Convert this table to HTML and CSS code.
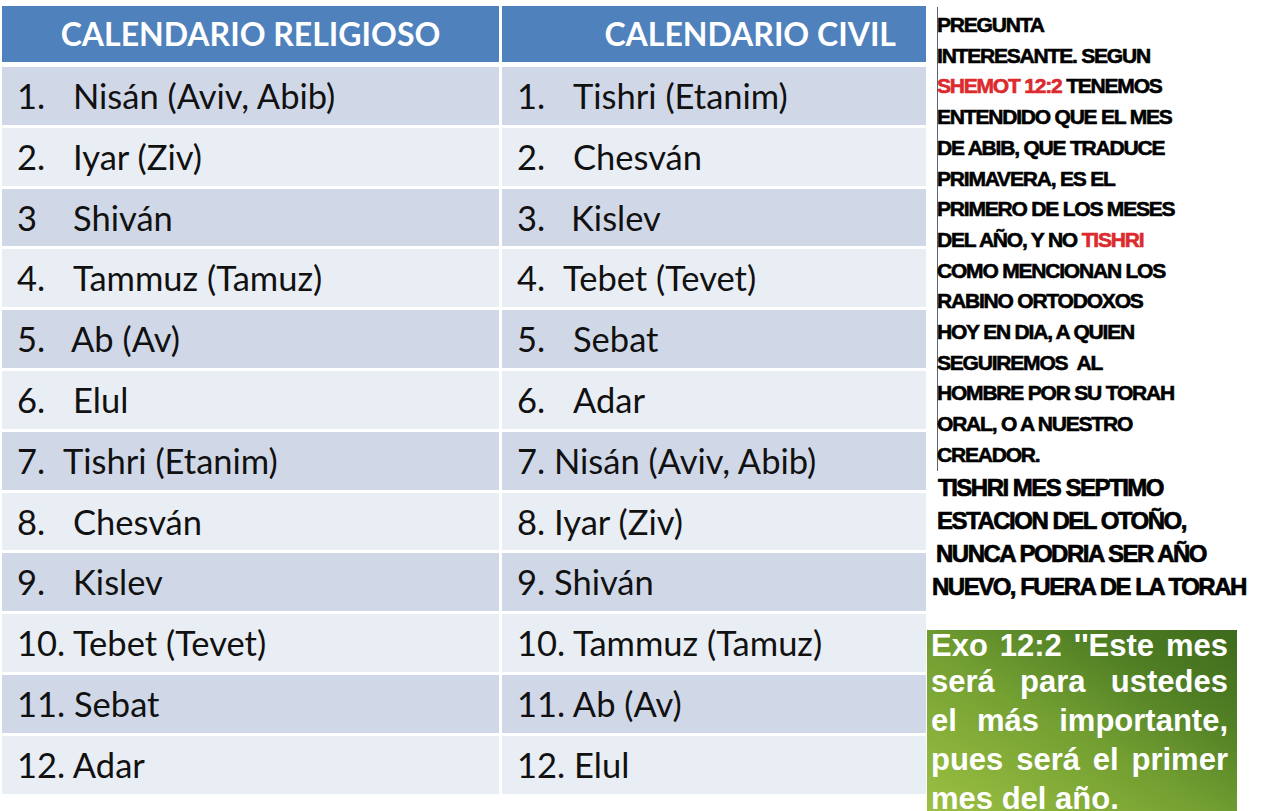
FILE: index.html
```html
<!DOCTYPE html>
<html lang="es">
<head>
<meta charset="utf-8">
<title>Calendario Religioso y Civil</title>
<link rel="stylesheet" href="styles.css">
</head>
<body>
<div class="page">
  <div class="table">
    <div class="head">
      <div class="hcell">CALENDARIO RELIGIOSO</div>
      <div class="hcell hcell-right">CALENDARIO CIVIL</div>
    </div>
    <div class="rows">
      <div class="row"><div class="cell"><span class="num">1.</span>Nisán (Aviv, Abib)</div><div class="cell"><span class="num">1.</span>Tishri (Etanim)</div></div>
      <div class="row"><div class="cell"><span class="num">2.</span>Iyar (Ziv)</div><div class="cell"><span class="num">2.</span>Chesván</div></div>
      <div class="row"><div class="cell"><span class="num">3</span>Shiván</div><div class="cell"><span class="num num-54">3.</span>Kislev</div></div>
      <div class="row"><div class="cell"><span class="num">4.</span>Tammuz (Tamuz)</div><div class="cell"><span class="num num-46">4.</span>Tebet (Tevet)</div></div>
      <div class="row"><div class="cell"><span class="num num-54">5.</span>Ab (Av)</div><div class="cell"><span class="num">5.</span>Sebat</div></div>
      <div class="row"><div class="cell"><span class="num">6.</span>Elul</div><div class="cell"><span class="num">6.</span>Adar</div></div>
      <div class="row"><div class="cell"><span class="num num-46">7.</span>Tishri (Etanim)</div><div class="cell">7. Nisán (Aviv, Abib)</div></div>
      <div class="row"><div class="cell"><span class="num">8.</span>Chesván</div><div class="cell">8. Iyar (Ziv)</div></div>
      <div class="row"><div class="cell"><span class="num">9.</span>Kislev</div><div class="cell">9. Shiván</div></div>
      <div class="row"><div class="cell">10. Tebet (Tevet)</div><div class="cell">10. Tammuz (Tamuz)</div></div>
      <div class="row"><div class="cell">11. Sebat</div><div class="cell">11. Ab (Av)</div></div>
      <div class="row"><div class="cell">12. Adar</div><div class="cell">12. Elul</div></div>
    </div>
  </div>

  <div class="side">
    <div class="note">
      <div>PREGUNTA</div>
      <div>INTERESANTE. SEGUN</div>
      <div><span class="red">SHEMOT 12:2</span> TENEMOS</div>
      <div>ENTENDIDO QUE EL MES</div>
      <div>DE ABIB, QUE TRADUCE</div>
      <div>PRIMAVERA, ES EL</div>
      <div>PRIMERO DE LOS MESES</div>
      <div>DEL AÑO, Y NO <span class="red">TISHRI</span></div>
      <div>COMO MENCIONAN LOS</div>
      <div>RABINO ORTODOXOS</div>
      <div>HOY EN DIA, A QUIEN</div>
      <div>SEGUIREMOS &nbsp;AL</div>
      <div>HOMBRE POR SU TORAH</div>
      <div>ORAL, O A NUESTRO</div>
      <div>CREADOR.</div>
    </div>
    <div class="note2">
      <div class="l1">TISHRI MES SEPTIMO</div>
      <div class="l2">ESTACION DEL OTOÑO,</div>
      <div class="l3">NUNCA PODRIA SER AÑO</div>
      <div class="l4">NUEVO, FUERA DE LA TORAH</div>
    </div>
    <div class="verse">
      <span class="vl vl-first">Exo 12:2 ''Este mes</span>
      <span class="vl">será para ustedes</span>
      <span class="vl">el más importante,</span>
      <span class="vl">pues será el primer</span>
      <span class="vl vl-last">mes del año.</span>
    </div>
  </div>
</div>
</body>
</html>
```

FILE: styles.css
```css
html, body {
  margin: 0;
  padding: 0;
  background: #ffffff;
  overflow: hidden;
}

.page {
  display: flex;
  align-items: flex-start;
  width: 1274px;
  height: 811px;
  overflow: hidden;
}

.table {
  margin: 6px 0 0 2px;
  width: 924px;
  font-family: Lato, "Open Sans", sans-serif;
}

.head {
  display: grid;
  grid-template-columns: 497px 424px;
  column-gap: 3px;
  margin-bottom: 5px;
}

.hcell {
  background: #4f81bd;
  color: #ffffff;
  font-weight: 700;
  font-size: 32px;
  height: 56px;
  line-height: 56px;
  text-align: center;
  white-space: nowrap;
}

.hcell-right {
  text-align: right;
  padding-right: 30px;
}

.rows {
  display: flex;
  flex-direction: column;
  gap: 3px;
}

.row {
  display: grid;
  grid-template-columns: 497px 424px;
  column-gap: 3px;
  height: 57.8px;
}

.cell {
  background: #e9edf4;
  color: #111111;
  font-size: 34.5px;
  line-height: 57.8px;
  padding-left: 15px;
  white-space: nowrap;
}

.row:nth-child(odd) .cell {
  background: #d0d8e8;
}

.num {
  display: inline-block;
  width: 56px;
}

.num-54 { width: 54px; }
.num-46 { width: 46px; }

.side {
  width: 348px;
  display: flex;
  flex-direction: column;
  font-family: "Liberation Sans", Arial, sans-serif;
  font-weight: 700;
  color: #000000;
}

.note {
  margin: 7px 0 0 11px;
  padding-top: 3px;
  border-left: 1px solid #55657a;
  font-size: 21px;
  line-height: 30.7px;
  letter-spacing: -1.2px;
  white-space: nowrap;
  -webkit-text-stroke: 0.6px #000000;
}

.note div {
  margin-left: -1px;
}

.red {
  color: #dc2a2e;
  -webkit-text-stroke-color: #dc2a2e;
}

.note2 {
  font-size: 24px;
  line-height: 33px;
  letter-spacing: -1.5px;
  white-space: nowrap;
  -webkit-text-stroke: 0.7px #000000;
}

.l1 { padding-left: 12px; }
.l2 { padding-left: 11px; }
.l3 { padding-left: 10px; }
.l4 { padding-left: 6px; }

.verse {
  margin: 27px 0 0 1px;
  width: 310px;
  height: 181px;
  overflow: hidden;
  box-sizing: border-box;
  padding: 0 9px 0 4px;
  background: linear-gradient(to top right, #9cc042 0%, #74a032 45%, #4f7e24 75%, #3d6a1c 100%);
  color: #ffffff;
  font-size: 31px;
  line-height: 39px;
}

.vl {
  display: block;
  white-space: nowrap;
  text-align: justify;
  text-align-last: justify;
}

.vl-first {
  line-height: 32px;
}

.vl-last {
  text-align-last: left;
}
```
